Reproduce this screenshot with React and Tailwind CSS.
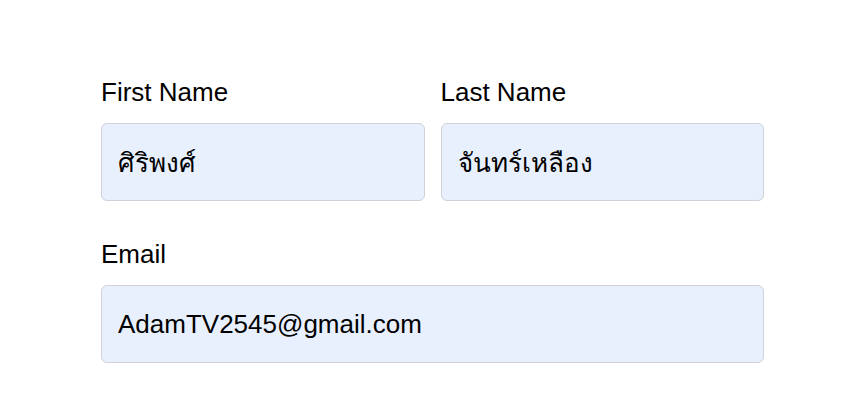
import { useState } from "react";

const Field = ({ label, value, onChange, type = "text", wide }) => {
    return (
        <div className={wide ? "flex flex-col w-full" : "flex flex-col flex-1"}>
            <label className="text-[26px] leading-[32px] text-black mb-[15px]">{label}</label>
            <input
                type={type}
                value={value}
                onChange={e => onChange(e.target.value)}
                className="h-[78px] w-full rounded-md border border-[#cfd2d8] bg-[#e8f0fe] px-4 text-[26px] text-black outline-none"
            />
        </div>
    )
}

const App = () => {

    const [firstName, setFirstName] = useState('ศิริพงศ์');
    const [lastName, setLastName] = useState('จันทร์เหลือง');
    const [email, setEmail] = useState('AdamTV2545@gmail.com');

    return (
        <div className="min-h-screen w-full bg-white" style={{ fontFamily: '"Liberation Sans", "Noto Sans", sans-serif' }}>
            <div className="pt-[76px] pl-[101px] w-[764px] flex flex-col gap-[37px]">
                <div className="flex gap-4">
                    <Field label="First Name" value={firstName} onChange={setFirstName} />
                    <Field label="Last Name" value={lastName} onChange={setLastName} />
                </div>
                <Field label="Email" type="email" value={email} onChange={setEmail} wide />
            </div>
        </div>
    )
}

export default App;
